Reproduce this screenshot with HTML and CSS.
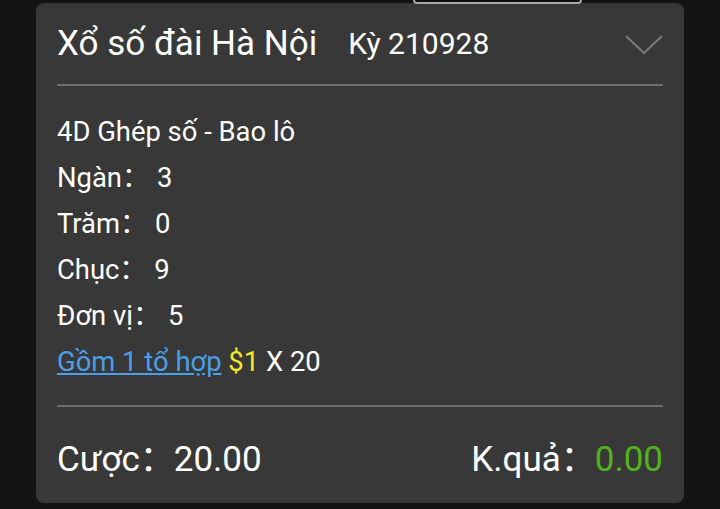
FILE: index.html
```html
<!DOCTYPE html>
<html lang="vi">
<head>
    <meta charset="UTF-8">
    <meta name="viewport" content="width=device-width, initial-scale=1.0">
    <title>Xổ số đài Hà Nội</title>
    <link rel="stylesheet" href="styles.css">
</head>
<body>
    <div class="page">
        <div class="tab"></div>
        <div class="card">
            <div class="card-head">
                <span class="title">Xổ số đài Hà Nội</span>
                <span class="period">Kỳ 210928</span>
                <svg class="chevron" width="38" height="20" viewBox="0 0 38 20">
                    <polyline points="1,1 19,18 37,1" fill="none" stroke="#7a7a7a" stroke-width="2"/>
                </svg>
            </div>
            <div class="card-body">
                <p>4D Ghép số - Bao lô</p>
                <p>Ngàn<span class="colon">：</span>3</p>
                <p>Trăm<span class="colon">：</span>0</p>
                <p>Chục<span class="colon">：</span>9</p>
                <p>Đơn vị<span class="colon">：</span>5</p>
                <p><a href="#">Gồm 1 tổ hợp</a> <span class="money">$1</span> X 20</p>
            </div>
            <div class="card-foot">
                <span>Cược<span class="colon">：</span>20.00</span>
                <span>K.quả<span class="colon">：</span><span class="win">0.00</span></span>
            </div>
        </div>
    </div>
</body>
</html>
```

FILE: styles.css
```css
body {
    margin: 0;
    padding: 0;
    background-color: #131313;
    font-family: Roboto, "Noto Sans CJK SC", sans-serif;
    color: #fff;
}
.page {
    position: relative;
    padding-top: 3px;
}
.tab {
    position: absolute;
    top: -6px;
    left: 413px;
    width: 165px;
    height: 6px;
    border: 2px solid #a8a8a8;
    border-radius: 4px;
    background: #111;
    z-index: 1;
}
.card {
    margin-left: 36px;
    width: 648px;
    height: 500px;
    box-sizing: border-box;
    padding: 0 21px;
    background-color: #383838;
    border-radius: 8px;
}
.card-head {
    display: flex;
    align-items: center;
    height: 81px;
    border-bottom: 2px solid #6c6c6c;
}
.title {
    font-size: 35px;
}
.period {
    font-size: 30px;
    margin-left: 31px;
}
.chevron {
    margin-left: auto;
    margin-top: 2px;
}
.card-body {
    padding: 23px 0 20px;
    border-bottom: 2px solid #6c6c6c;
}
.card-body p {
    margin: 0;
    font-size: 27.4px;
    line-height: 46px;
}
.colon {
    display: inline-block;
    width: 35px;
}
.card-body a {
    color: #4a9fe8;
    text-decoration: underline;
}
.money {
    color: #f5e82a;
}
.card-foot {
    display: flex;
    justify-content: space-between;
    align-items: center;
    height: 96px;
    font-size: 35px;
}
.card-foot .colon {
    width: 34px;
}
.win {
    color: #52b21c;
}
```
